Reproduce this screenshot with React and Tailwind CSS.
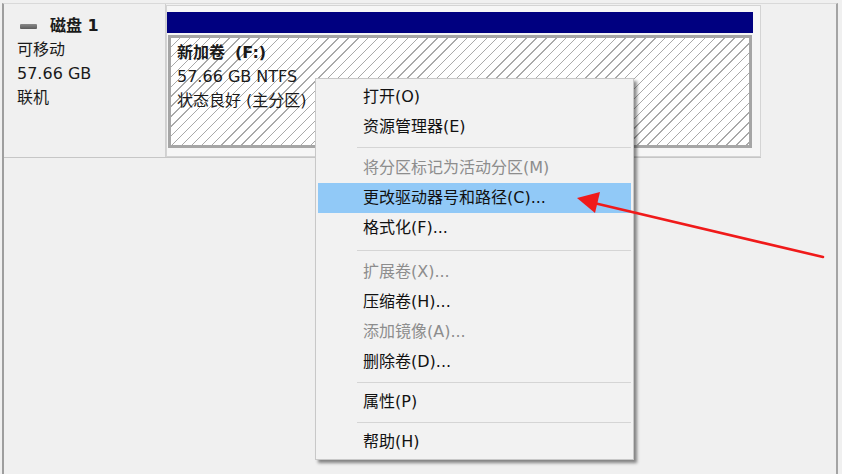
import React from "react";

const F = "font-['DejaVu_Sans','Noto_Sans_CJK_SC',sans-serif]";

function Item({ children, disabled, active }) {
  return (
    <div
      className={
        "mx-[2px] flex h-[30px] items-center pl-[45px] text-[16px] leading-none " +
        (active ? "bg-[#91c9f7] " : "") +
        (disabled ? "text-[#8d8d8d]" : "text-[#111111]")
      }
    >
      {children}
    </div>
  );
}

function Sep({ h }) {
  return (
    <div className={"flex items-center " + h}>
      <div className="ml-[41px] mr-[2px] h-px flex-1 bg-[#d5d5d5]" />
    </div>
  );
}

export default function App() {
  return (
    <div className={"relative h-[474px] w-[842px] overflow-hidden bg-[#f0f0f0] pl-[2px] pt-[3px] " + F}>
      <div className="h-[471px] w-[836px] border-l-2 border-r-2 border-t border-l-[#9e9e9e] border-r-[#a4a4a4] border-t-[#d9d9d9]">
        <div className="flex h-[154px] w-[757px] border-b border-b-[#c6c6c6]">
          {/* left disk panel */}
          <div className="h-full w-[162px] border-r border-r-[#d0d0d0] pt-[10px] text-[16px] leading-[24px] text-[#1a1a1a]">
            <div className="flex items-center pl-[16px]">
              <div className="mr-[13px] h-[5px] w-[17px] rounded-[1px] bg-[linear-gradient(#8a8a8a,#5c5c5c)]" />
              <span className="font-bold">磁盘 1</span>
            </div>
            <div className="pl-[13px]">可移动</div>
            <div className="pl-[13px]">57.66 GB</div>
            <div className="pl-[13px]">联机</div>
          </div>
          {/* right partition box */}
          <div className="mt-[1px] h-[152px] flex-1 border border-[#d4d4d4] bg-[#f6f6f6]">
            <div className="mt-[6px] h-[21px] w-[586px] bg-[#000080]" />
            <div className="ml-[1px] mt-[2px] h-[113px] w-[584px] border-[3px] border-[#a6a6a6] bg-[image:repeating-linear-gradient(135deg,#ffffff_0px,#ffffff_6px,#a9a9a9_6px,#a9a9a9_7px)] pl-[6px] pt-[3px] text-[16px] leading-[24px] text-[#1a1a1a]">
              <div className="font-bold">
                新加卷<span className="ml-[10px]">(F:)</span>
              </div>
              <div>57.66 GB NTFS</div>
              <div>状态良好 (主分区)</div>
            </div>
          </div>
        </div>
      </div>

      {/* context menu */}
      <div className="absolute left-[315px] top-[78px] h-[382px] w-[319px] border border-[#c8c8c8] bg-[#f2f2f2] pt-[3px] shadow-[3px_3px_3px_rgba(0,0,0,0.45)]">
        <Item>打开(O)</Item>
        <Item>资源管理器(E)</Item>
        <Sep h="h-[11px]" />
        <Item disabled>将分区标记为活动分区(M)</Item>
        <Item active>更改驱动器号和路径(C)...</Item>
        <Item>格式化(F)...</Item>
        <Sep h="h-[14px]" />
        <Item disabled>扩展卷(X)...</Item>
        <Item>压缩卷(H)...</Item>
        <Item disabled>添加镜像(A)...</Item>
        <Item>删除卷(D)...</Item>
        <Sep h="h-[10px]" />
        <Item>属性(P)</Item>
        <Sep h="h-[10px]" />
        <Item>帮助(H)</Item>
      </div>

      {/* red arrow annotation */}
      <svg className="absolute left-0 top-0" width="842" height="474" viewBox="0 0 842 474">
        <line x1="823" y1="257" x2="594" y2="203" stroke="#f01a1a" strokeWidth="2.6" strokeLinecap="round" />
        <polygon points="577,198 600,192 595,213" fill="#f01a1a" />
      </svg>
    </div>
  );
}
